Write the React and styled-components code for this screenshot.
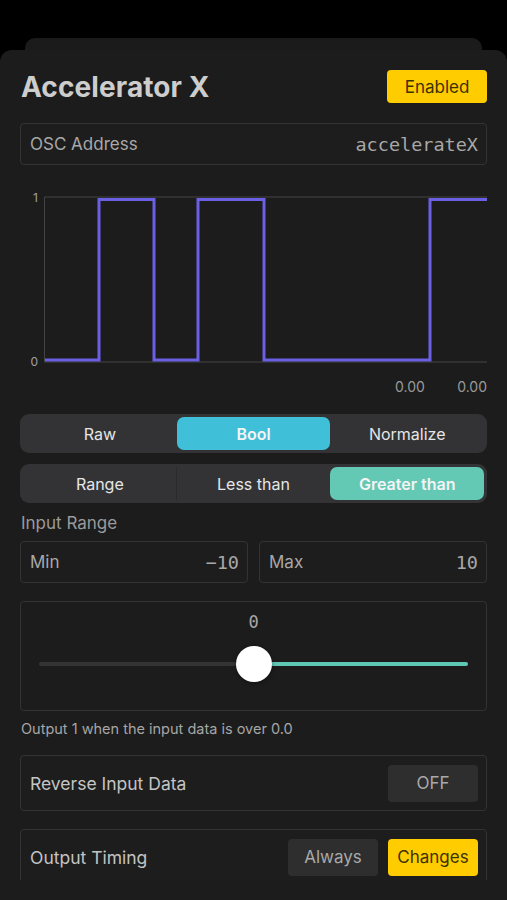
import React from "react";
import styled, { createGlobalStyle } from "styled-components";

const Global = createGlobalStyle`
  html, body { margin: 0; padding: 0; background: #000; }
  body { font-family: Inter, "Noto Sans", sans-serif; -webkit-font-smoothing: antialiased; }
  * { box-sizing: border-box; }
`;

const Page = styled.div`
  width: 507px;
  height: 900px;
  overflow: hidden;
  background: #000;
  padding-top: 38px;
  display: flex;
  flex-direction: column;
`;

const BackSheet = styled.div`
  margin: 0 25px;
  height: 12px;
  background: #1b1b1b;
  border-radius: 10px 10px 0 0;
  flex: none;
`;

const Card = styled.div`
  flex: 1;
  background: #1c1c1c;
  border-radius: 12px 12px 0 0;
  padding: 20px 20px 20px;
  display: flex;
  flex-direction: column;
  min-height: 0;
`;

const Scroll = styled.div`
  flex: 1;
  overflow: hidden;
  display: flex;
  flex-direction: column;
`;

const TitleRow = styled.div`
  display: flex;
  align-items: center;
  justify-content: space-between;
  height: 33px;
  flex: none;
`;

const Title = styled.h1`
  margin: 0 0 0 1px;
  font-size: 28px;
  font-weight: 700;
  color: #cdcdcd;
  letter-spacing: 0.1px;
`;

const YellowButton = styled.button`
  border: none;
  border-radius: 4px;
  background: #ffcc00;
  color: #3b3200;
  font-family: Inter, sans-serif;
  font-size: 17px;
  width: ${(p) => p.$w || 90}px;
  height: ${(p) => p.$h || 37}px;
  padding: 0;
`;

const GreyButton = styled.button`
  border: none;
  border-radius: 4px;
  background: #2e2e2e;
  color: #a9a9a9;
  font-family: Inter, sans-serif;
  font-size: 17px;
  width: 90px;
  height: 37px;
  padding: 0;
`;

const Field = styled.div`
  display: flex;
  align-items: center;
  justify-content: space-between;
  height: ${(p) => p.$h || 42}px;
  margin-top: ${(p) => p.$mt || 0}px;
  border: 1px solid #333333;
  border-radius: 4px;
  background: #1d1d1d;
  padding: 0 ${(p) => p.$pr ?? 8}px 0 9px;
  flex: ${(p) => (p.$grow ? 1 : "none")};
`;

const FieldLabel = styled.span`
  font-size: 17px;
  color: #a8a8a8;
`;

const RowLabel = styled.span`
  font-size: 17.5px;
  color: #c4c4c4;
`;

const Mono = styled.span`
  font-family: "DejaVu Sans Mono", "Liberation Mono", monospace;
  font-size: 18.5px;
  color: #a8a8a8;
`;

const Chart = styled.svg`
  display: block;
  margin-top: 18px;
  flex: none;
`;

const Segmented = styled.div`
  display: flex;
  height: 39px;
  margin-top: ${(p) => p.$mt}px;
  background: #333335;
  border-radius: 9px;
  padding: 3px;
  flex: none;
`;

const SegOption = styled.div`
  flex: 1;
  display: flex;
  align-items: center;
  justify-content: center;
  font-size: 16px;
  font-weight: ${(p) => (p.$active ? 600 : 400)};
  color: ${(p) => (p.$active ? "#f4f4f4" : "#e6e6e6")};
  background: ${(p) => (p.$active ? p.$color : "transparent")};
  box-shadow: ${(p) => (p.$divider ? "inset -1px 0 0 #2a2a2c" : "none")};
  border-radius: ${(p) => (p.$divider ? "0" : "7px")};
`;

const SectionLabel = styled.div`
  margin-top: 10px;
  line-height: 20px;
  font-size: 17px;
  color: #9a9a9a;
  padding-left: 1px;
  flex: none;
`;

const Pair = styled.div`
  display: flex;
  gap: 11px;
  margin-top: 8px;
  flex: none;
`;

const SliderBox = styled.div`
  margin-top: 18px;
  height: 110px;
  border: 1px solid #333333;
  border-radius: 4px;
  display: flex;
  flex-direction: column;
  align-items: stretch;
  padding: 10px 18px 0;
  flex: none;
`;

const SliderValue = styled.div`
  text-align: center;
  line-height: 20px;
  font-family: "DejaVu Sans Mono", "Liberation Mono", monospace;
  font-size: 17px;
  color: #a8a8a8;
`;

const Track = styled.div`
  position: relative;
  margin-top: 30px;
  height: 4px;
  border-radius: 2px;
  background: #343434;
  display: flex;
`;

const TrackFill = styled.div`
  margin-left: auto;
  height: 4px;
  border-radius: 2px;
  background: #5fc8b3;
`;

const Thumb = styled.div`
  position: absolute;
  top: 50%;
  width: 36px;
  height: 36px;
  margin: -18px 0 0 -18px;
  border-radius: 50%;
  background: #ffffff;
  box-shadow: 0 1px 4px rgba(0, 0, 0, 0.4);
`;

const Help = styled.div`
  margin-top: 9px;
  line-height: 18px;
  font-size: 14.5px;
  color: #a6a6a6;
  padding-left: 1px;
  flex: none;
`;

const Buttons = styled.div`
  display: flex;
  gap: 10px;
`;

const steps = [
  [0, 0], [79, 0], [79, 1], [134, 1], [134, 0], [178, 0], [178, 1],
  [244, 1], [244, 0], [410, 0], [410, 1], [467, 1],
];

function StepChart() {
  const yHi = 16.5;
  const yLo = 177;
  const pts = steps
    .map(([x, v]) => `${x === 0 ? 25 : x},${v ? yHi : yLo}`)
    .join(" ");
  return (
    <Chart width="467" height="215" viewBox="0 0 467 215">
      <polyline points="24.5,179 24.5,14 467,14" fill="none" stroke="#444" strokeWidth="1" />
      <line x1="24.5" y1="179" x2="467" y2="179" stroke="#444" strokeWidth="1" />
      <polyline points={pts} fill="none" stroke="#6b5fe3" strokeWidth="3" strokeLinejoin="miter" />
      <text x="18" y="19" textAnchor="end" fill="#a0a0a0" fontSize="12" fontFamily="Inter, sans-serif">1</text>
      <text x="18" y="183" textAnchor="end" fill="#a0a0a0" fontSize="12" fontFamily="Inter, sans-serif">0</text>
      <text x="390" y="209" textAnchor="middle" fill="#9a9a9a" fontSize="14" fontFamily="Inter, sans-serif">0.00</text>
      <text x="467" y="209" textAnchor="end" fill="#9a9a9a" fontSize="14" fontFamily="Inter, sans-serif">0.00</text>
    </Chart>
  );
}

export default function App() {
  const min = -10;
  const max = 10;
  const value = 0;
  const pct = ((value - min) / (max - min)) * 100;
  return (
    <>
      <Global />
      <Page>
        <BackSheet />
        <Card>
          <Scroll>
            <TitleRow>
              <Title>Accelerator X</Title>
              <YellowButton $w={100} $h={33}>Enabled</YellowButton>
            </TitleRow>
            <Field $mt={20}>
              <FieldLabel>OSC Address</FieldLabel>
              <Mono>accelerateX</Mono>
            </Field>
            <StepChart />
            <Segmented $mt={16}>
              <SegOption>Raw</SegOption>
              <SegOption $active $color="#3fbfd8">Bool</SegOption>
              <SegOption>Normalize</SegOption>
            </Segmented>
            <Segmented $mt={11}>
              <SegOption $divider>Range</SegOption>
              <SegOption>Less than</SegOption>
              <SegOption $active $color="#63c8b4">Greater than</SegOption>
            </Segmented>
            <SectionLabel>Input Range</SectionLabel>
            <Pair>
              <Field $grow>
                <FieldLabel>Min</FieldLabel>
                <Mono>−10</Mono>
              </Field>
              <Field $grow>
                <FieldLabel>Max</FieldLabel>
                <Mono>10</Mono>
              </Field>
            </Pair>
            <SliderBox>
              <SliderValue>{value}</SliderValue>
              <Track>
                <TrackFill style={{ width: `${100 - pct}%` }} />
                <Thumb style={{ left: `${pct}%` }} />
              </Track>
            </SliderBox>
            <Help>Output 1 when the input data is over 0.0</Help>
            <Field $h={56} $mt={17}>
              <RowLabel>Reverse Input Data</RowLabel>
              <GreyButton>OFF</GreyButton>
            </Field>
            <Field $h={56} $mt={18}>
              <RowLabel>Output Timing</RowLabel>
              <Buttons>
                <GreyButton>Always</GreyButton>
                <YellowButton>Changes</YellowButton>
              </Buttons>
            </Field>
          </Scroll>
        </Card>
      </Page>
    </>
  );
}
